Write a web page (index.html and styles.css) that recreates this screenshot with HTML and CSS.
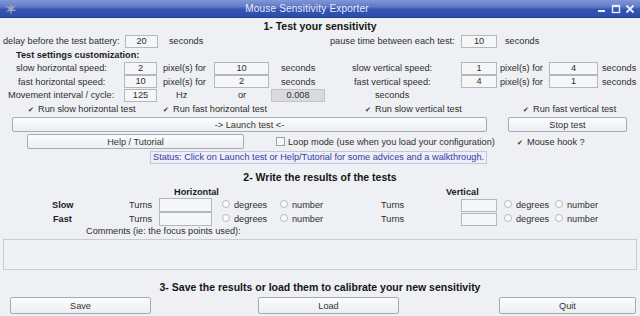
FILE: index.html
```html
<!DOCTYPE html>
<html lang="en">
<head>
  <meta charset="UTF-8" />
  <title>Mouse Sensitivity Exporter</title>
  <link rel="stylesheet" href="styles.css">
</head>
<body>
<div class="window">
  <div class="titlebar">
    <svg class="app-icon" width="12" height="12" viewBox="0 0 12 12">
      <path d="M6 0 L7 4 L11 2 L8 6 L12 8 L7 8 L6 12 L5 8 L1 9 L4 6 L0 3 L5 4 Z" fill="#9aa3b8"/>
    </svg>
    <span class="title">Mouse Sensitivity Exporter</span>
    <div class="controls">
      <svg width="10" height="10" viewBox="0 0 10 10"><rect x="1" y="6" width="7" height="2" fill="#e8eefc"/></svg>
      <svg width="10" height="10" viewBox="0 0 10 10"><rect x="1.5" y="1.5" width="7" height="7" fill="none" stroke="#e8eefc" stroke-width="1.4"/><rect x="1" y="1" width="8" height="2" fill="#e8eefc"/></svg>
      <svg width="10" height="10" viewBox="0 0 10 10"><path d="M1.5 1.5 L8.5 8.5 M8.5 1.5 L1.5 8.5" stroke="#e8eefc" stroke-width="1.8"/></svg>
    </div>
  </div>

  <div class="content">
    <div class="heading h-first">1- Test your sensitivity</div>

    <div class="row r-delay">
      <span>delay before the test battery:</span>
      <span class="field f-num">20</span>
      <span>seconds</span>
      <span>pause time between each test:</span>
      <span class="field f-vnum">10</span>
      <span>seconds</span>
    </div>

    <div class="row r-sub">
      <span class="bold">Test settings customization:</span>
    </div>

    <div class="row r-speed r-slow">
      <span>slow horizontal speed:</span>
      <span class="field f-num">2</span>
      <span>pixel(s) for</span>
      <span class="field f-wide">10</span>
      <span>seconds</span>
      <span>slow vertical speed:</span>
      <span class="field f-vnum">1</span>
      <span>pixel(s) for</span>
      <span class="field f-vwide">4</span>
      <span>seconds</span>
    </div>

    <div class="row r-speed r-fast">
      <span>fast horizontal speed:</span>
      <span class="field f-num">10</span>
      <span>pixel(s) for</span>
      <span class="field f-wide">2</span>
      <span>seconds</span>
      <span>fast vertical speed:</span>
      <span class="field f-vnum">4</span>
      <span>pixel(s) for</span>
      <span class="field f-vwide">1</span>
      <span>seconds</span>
    </div>

    <div class="row r-move">
      <span>Movement interval / cycle:</span>
      <span class="field f-num">125</span>
      <span>Hz</span>
      <span>or</span>
      <span class="field f-gray">0.008</span>
      <span>seconds</span>
    </div>

    <div class="row r-checks">
      <span class="check on">Run slow horizontal test</span>
      <span class="check on">Run fast horizontal test</span>
      <span class="check on">Run slow vertical test</span>
      <span class="check on">Run fast vertical test</span>
    </div>

    <div class="row r-launch">
      <button class="btn b-launch">-&gt; Launch test &lt;-</button>
      <button class="btn b-stop">Stop test</button>
    </div>

    <div class="row r-help">
      <button class="btn b-help">Help / Tutorial</button>
      <span class="check">Loop mode (use when you load your configuration)</span>
      <span class="check on">Mouse hook ?</span>
    </div>

    <div class="row r-status">
      <span class="status">Status: Click on Launch test or Help/Tutorial for some advices and a walkthrough.</span>
    </div>

    <div class="heading h-second">2- Write the results of the tests</div>

    <div class="row r-axes">
      <span class="bold">Horizontal</span>
      <span class="bold">Vertical</span>
    </div>

    <div class="row r-turns r-tslow">
      <span class="bold">Slow</span>
      <span>Turns</span>
      <span class="field f-turns"></span>
      <span class="radio">degrees</span>
      <span class="radio">number</span>
      <span>Turns</span>
      <span class="field f-vnum"></span>
      <span class="radio">degrees</span>
      <span class="radio">number</span>
    </div>

    <div class="row r-turns r-tfast">
      <span class="bold">Fast</span>
      <span>Turns</span>
      <span class="field f-turns"></span>
      <span class="radio">degrees</span>
      <span class="radio">number</span>
      <span>Turns</span>
      <span class="field f-vnum"></span>
      <span class="radio">degrees</span>
      <span class="radio">number</span>
    </div>

    <div class="row r-comments">
      <span>Comments (ie: the focus points used):</span>
    </div>

    <div class="comments"></div>

    <div class="heading h-third">3- Save the results or load them to calibrate your new sensitivity</div>

    <div class="row r-save">
      <button class="btn">Save</button>
      <button class="btn">Load</button>
      <button class="btn">Quit</button>
    </div>
  </div>
</div>
</body>
</html>
```

FILE: styles.css
```css
body {
  margin: 0;
  font-family: "Liberation Sans", Arial, sans-serif;
  font-size: 9.2px;
  color: #2e2e2e;
  background: #eef0f3;
}

.window {
  width: 640px;
  height: 316px;
  overflow: hidden;
  background: #eef0f3;
}

.titlebar {
  height: 18px;
  display: flex;
  align-items: center;
  justify-content: space-between;
  padding: 0 5px;
  box-sizing: border-box;
  background: linear-gradient(#8297d6 0%, #6079c6 40%, #3655b2 55%, #2d4ba9 100%);
  border-bottom: 1px solid #23408f;
}

.title {
  color: #e6ecfb;
  font-size: 10px;
  letter-spacing: 0.2px;
}

.controls {
  display: flex;
  gap: 4px;
}

.content {
  display: flex;
  flex-direction: column;
}

.heading {
  font-weight: bold;
  font-size: 10.5px;
  color: #151515;
  text-align: center;
  height: 15px;
  line-height: 15px;
}

.h-first { margin-top: 1px; }
.h-second { margin-top: 5px; }
.h-third { margin-top: 10px; }

.bold {
  font-weight: bold;
  color: #1c1c1c;
}

.row {
  display: grid;
  align-items: center;
  white-space: nowrap;
}

.field {
  box-sizing: border-box;
  height: 13px;
  line-height: 11px;
  border: 1px solid #b3b7be;
  background: #f5f6f8;
  text-align: center;
}

.f-num { width: 33px; }
.f-vnum { width: 36px; }
.f-wide { width: 55px; }
.f-vwide { width: 49px; }
.f-gray { width: 54px; background: #d9dadd; border-color: #c3c5c9; }
.f-turns { width: 53px; height: 14px; }

.r-delay {
  height: 14px;
  padding-left: 3px;
  grid-template-columns: 122px 44px 161px 131px 44px auto;
}

.r-sub {
  height: 13px;
  padding-left: 16px;
}

.r-slow {
  height: 14px;
  padding-left: 16px;
  grid-template-columns: 108px 39px 51px 67px 71px 109px 39px 49px 53px auto;
}

.r-fast {
  height: 13px;
  padding-left: 18px;
  grid-template-columns: 106px 39px 51px 67px 73px 107px 39px 49px 53px auto;
}

.r-move {
  height: 14px;
  padding-left: 8px;
  grid-template-columns: 116px 52px 62px 33px 104px auto;
}

.r-checks {
  height: 14px;
  padding-left: 28px;
  grid-template-columns: 135px 202px 158px auto;
}

.check::before {
  content: "";
  display: inline-block;
  width: 7px;
  height: 7px;
  margin-right: 3px;
  vertical-align: -1px;
  border: 1px solid #9ea2a9;
  background: #f7f8fa;
}

.check.on::before {
  content: "\2714";
  border: none;
  background: none;
  width: 8px;
  height: auto;
  font-size: 7px;
  line-height: 8px;
  margin-right: 2px;
  vertical-align: 0;
  color: #333;
}

.btn {
  box-sizing: border-box;
  height: 15px;
  padding: 0;
  font: inherit;
  color: #333;
  border: 1px solid #a6aab1;
  border-radius: 2px;
  background: linear-gradient(#fbfcfd, #eceef1);
}

.r-launch {
  height: 17px;
  padding-left: 12px;
  grid-template-columns: 496px 119px;
}

.b-launch { width: 475px; }
.b-stop { width: 119px; }

.r-help {
  height: 17px;
  padding-left: 27px;
  grid-template-columns: 249px 241px auto;
}

.b-help { width: 217px; }

.r-status {
  height: 15px;
  padding-left: 150px;
}

.status {
  box-sizing: border-box;
  width: 337px;
  height: 13px;
  line-height: 11px;
  padding-left: 2px;
  color: #3b3b9e;
  background: #eceef8;
  border: 1px solid #c3c6da;
}

.r-axes {
  height: 13px;
  padding-left: 174px;
  grid-template-columns: 272px auto;
}

.r-turns {
  grid-template-columns: 77px 30px 63px 58px 101px 80px 43px 51px auto;
}

.r-tslow { height: 14px; padding-left: 52px; }
.r-tfast { height: 13px; padding-left: 53px; grid-template-columns: 76px 30px 63px 58px 101px 80px 43px 51px auto; }

.radio::before {
  content: "";
  display: inline-block;
  width: 6px;
  height: 6px;
  margin-right: 4px;
  vertical-align: 0;
  border: 1px solid #b6bac0;
  border-radius: 50%;
  background: #fafbfc;
}

.r-comments {
  height: 12px;
  padding-left: 86px;
}

.comments {
  box-sizing: border-box;
  width: 634px;
  height: 31px;
  margin: 2px 0 0 3px;
  border: 1px solid #c8cbd0;
  background: #eff1f4;
}

.r-save {
  height: 17px;
  margin-top: 2px;
  padding-left: 10px;
  grid-template-columns: 248px 241px 137px;
}

.r-save .btn {
  height: 17px;
  width: 141px;
}

.r-save .btn:last-child { width: 137px; }
```
